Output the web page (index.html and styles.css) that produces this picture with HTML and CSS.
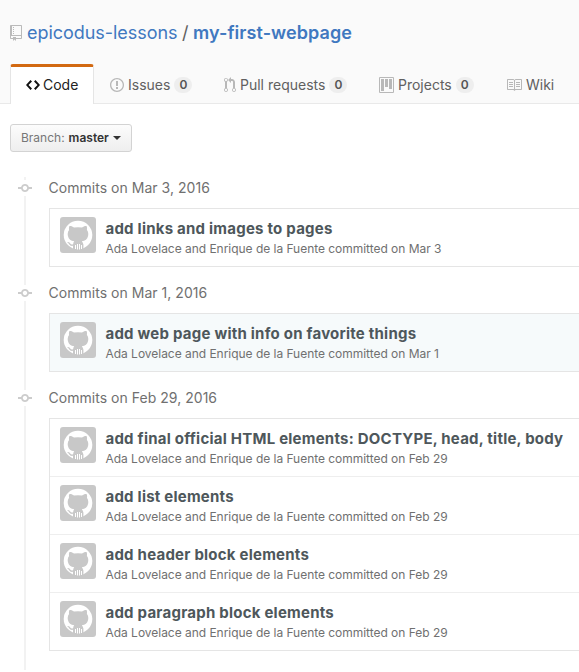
FILE: index.html
```html
<!DOCTYPE html>
<html lang="en">
<head>
<meta charset="utf-8">
<title>my-first-webpage</title>
<link rel="stylesheet" href="styles.css">
</head>
<body>
<svg class="defs" width="0" height="0" aria-hidden="true">
  <symbol id="commit" viewBox="0 0 14 16"><path d="M10.86 7c-.45-1.72-2-3-3.86-3-1.86 0-3.41 1.28-3.86 3H0v2h3.14c.45 1.72 2 3 3.86 3 1.86 0 3.41-1.28 3.86-3H14V7h-3.14zM7 10.2c-1.22 0-2.2-.98-2.2-2.2 0-1.22.98-2.2 2.2-2.2 1.22 0 2.2.98 2.2 2.2 0 1.22-.98 2.2-2.2 2.2z"/></symbol>
  <symbol id="avatar" viewBox="0 0 36 36">
    <circle cx="18" cy="18" r="14.3" fill="#fff"/>
    <path fill="#c8c8c8" d="M9.3 9.2C10.8 8.8 12.5 9.6 14 10.6Q18 9.9 22 10.6C23.5 9.6 25.2 8.8 26.7 9.2Q27.4 11 26.9 12.9C28.3 14.4 28.6 17 28 19.3C27.3 22.3 25.3 23.7 21.8 24.3Q23 25.5 23.4 27.5V33H13V28.8C10.5 29.2 9.6 28 8.8 26.7Q8.2 25.8 7.2 25.2C9 24.8 9.8 26 10.5 26.8Q11.4 27.8 13.1 27.2Q13.3 25.2 14.2 24.3C10.7 23.7 8.7 22.3 8 19.3C7.4 17 7.7 14.4 9.1 12.9Q8.6 11 9.3 9.2Z"/>
    <path fill="none" stroke="#fff" stroke-width="1" d="M15.5 28V32M17.5 27V32.5M19.5 27V32.5M21.5 28V32"/>
  </symbol>
</svg>
<header class="head">
  <h1 class="repo">
    <svg class="repo-icon" viewBox="0 0 12 16"><path d="M4 9H3V8h1v1zm0-3H3v1h1V6zm0-2H3v1h1V4zm0-2H3v1h1V2zm8-1v12c0 .55-.45 1-1 1H6v2l-1.5-1.5L3 16v-2H1c-.55 0-1-.45-1-1V1c0-.55.45-1 1-1h10c.55 0 1 .45 1 1zm-1 10H1v2h2v-1h3v1h5v-2zm0-10H2v9h9V1z"/></svg>
    <a class="owner">epicodus-lessons</a><span class="slash">/</span><a class="name">my-first-webpage</a>
  </h1>
  <nav class="tabs">
    <a class="tab tab-code"><svg width="14" height="16" viewBox="0 0 14 16"><path d="M9.5 3L8 4.5 11.5 8 8 11.5 9.5 13 14 8 9.5 3zm-5 0L0 8l4.5 5L6 11.5 2.5 8 6 4.5 4.5 3z"/></svg><span>Code</span></a>
    <a class="tab tab-issues"><svg width="14" height="16" viewBox="0 0 14 16"><path d="M7 2.3c3.14 0 5.7 2.56 5.7 5.7s-2.56 5.7-5.7 5.7A5.71 5.71 0 0 1 1.3 8c0-3.14 2.56-5.7 5.7-5.7zM7 1C3.14 1 0 4.14 0 8s3.14 7 7 7 7-3.14 7-7-3.14-7-7-7zm1 3H6v5h2V4zm0 6H6v2h2v-2z"/></svg><span>Issues</span><b class="count">0</b></a>
    <a class="tab tab-pulls"><svg width="12" height="16" viewBox="0 0 12 16"><path d="M11 11.28V5c-.03-.78-.34-1.47-.94-2.06C9.46 2.35 8.78 2.03 8 2H7V0L4 3l3 3V4h1c.27.02.48.11.69.31.21.2.3.42.31.69v6.28A1.993 1.993 0 0 0 10 15a1.993 1.993 0 0 0 1-3.72zm-1 2.92c-.66 0-1.2-.55-1.2-1.2 0-.65.55-1.2 1.2-1.2.65 0 1.2.55 1.2 1.2 0 .65-.55 1.2-1.2 1.2zM4 3c0-1.11-.89-2-2-2a1.993 1.993 0 0 0-1 3.72v6.56A1.993 1.993 0 0 0 2 15a1.993 1.993 0 0 0 1-3.72V4.72c.59-.34 1-.98 1-1.72zm-.8 10c0 .66-.55 1.2-1.2 1.2-.65 0-1.2-.55-1.2-1.2 0-.65.55-1.2 1.2-1.2.65 0 1.2.55 1.2 1.2zM2 4.2C1.34 4.2.8 3.65.8 3c0-.65.55-1.2 1.2-1.2.65 0 1.2.55 1.2 1.2 0 .65-.55 1.2-1.2 1.2z"/></svg><span>Pull requests</span><b class="count">0</b></a>
    <a class="tab tab-projects"><svg width="15" height="16" viewBox="0 0 15 16"><path fill-rule="evenodd" d="M10 12h3V2h-3v10zm-4-2h3V2H6v8zm-4 4h3V2H2v12zm-1 1h13V1H1v14zM14 0H1a1 1 0 0 0-1 1v14a1 1 0 0 0 1 1h13a1 1 0 0 0 1-1V1a1 1 0 0 0-1-1z"/></svg><span>Projects</span><b class="count">0</b></a>
    <a class="tab tab-wiki"><svg width="16" height="16" viewBox="0 0 16 16"><path d="M3 5h4v1H3V5zm0 3h4V7H3v1zm0 2h4V9H3v1zm11-5h-4v1h4V5zm0 2h-4v1h4V7zm0 2h-4v1h4V9zm2-6v9c0 .55-.45 1-1 1H9.5l-1 1-1-1H2c-.55 0-1-.45-1-1V3c0-.55.45-1 1-1h5.5l1 1 1-1H15c.55 0 1 .45 1 1zm-8 .5L7.5 3H2v9h6V3.5zm7-.5H9.5l-.5.5V12h6V3z"/></svg><span>Wiki</span></a>
  </nav>
</header>
<main>
  <button class="branch"><span>Branch:</span><b>master</b><i class="caret"></i></button>
  <div class="timeline">
    <section class="group">
      <h2 class="day"><svg class="dot"><use href="#commit"/></svg>Commits on Mar 3, 2016</h2>
      <ol class="list">
        <li class="row"><svg class="avatar"><use href="#avatar"/></svg><div><p class="title">add links and images to pages</p><p class="meta">Ada Lovelace and Enrique de la Fuente committed on Mar 3</p></div></li>
      </ol>
    </section>
    <section class="group">
      <h2 class="day"><svg class="dot"><use href="#commit"/></svg>Commits on Mar 1, 2016</h2>
      <ol class="list">
        <li class="row active"><svg class="avatar"><use href="#avatar"/></svg><div><p class="title">add web page with info on favorite things</p><p class="meta">Ada Lovelace and Enrique de la Fuente committed on Mar 1</p></div></li>
      </ol>
    </section>
    <section class="group">
      <h2 class="day"><svg class="dot"><use href="#commit"/></svg>Commits on Feb 29, 2016</h2>
      <ol class="list">
        <li class="row"><svg class="avatar"><use href="#avatar"/></svg><div><p class="title">add final official HTML elements: DOCTYPE, head, title, body</p><p class="meta">Ada Lovelace and Enrique de la Fuente committed on Feb 29</p></div></li>
        <li class="row"><svg class="avatar"><use href="#avatar"/></svg><div><p class="title">add list elements</p><p class="meta">Ada Lovelace and Enrique de la Fuente committed on Feb 29</p></div></li>
        <li class="row"><svg class="avatar"><use href="#avatar"/></svg><div><p class="title">add header block elements</p><p class="meta">Ada Lovelace and Enrique de la Fuente committed on Feb 29</p></div></li>
        <li class="row"><svg class="avatar"><use href="#avatar"/></svg><div><p class="title">add paragraph block elements</p><p class="meta">Ada Lovelace and Enrique de la Fuente committed on Feb 29</p></div></li>
      </ol>
    </section>
  </div>
</main>
</body>
</html>
```
FILE: styles.css
```css
* { box-sizing: border-box; }
body { margin: 0; height: 672px; overflow: hidden; background: #fff; color: #606060; font: 14px/20px Inter, "Liberation Sans", sans-serif; }
h1, h2, p, ol { margin: 0; padding: 0; font-weight: 400; list-style: none; }
svg { flex: none; fill: currentColor; }
.defs { display: block; }
.head { height: 104px; padding: 20px 0 0 10px; background: #fafafa; border-bottom: 1px solid #e9e9e9; }
.repo { display: flex; align-items: center; height: 26px; font-size: 18px; line-height: 26px; white-space: nowrap; }
.repo-icon { width: 12px; height: 16px; margin-right: 5px; color: #bababa; }
.repo a { color: #4078c0; }
.repo .owner { letter-spacing: -0.04px; }
.repo .name { font-weight: 600; letter-spacing: 0.07px; }
.slash { margin: 0 4.5px; }
.tabs { display: flex; height: 40px; margin-top: 18px; }
.tab { display: flex; align-items: center; height: 39px; padding: 3px 0 0 16px; white-space: nowrap; }
.tab svg { margin-right: 4px; color: #b8b8b8; }
.tab-code { width: 84px; height: 40px; padding: 0 0 2px 15px; background: #fff; color: #222; border: 1px solid #e5e5e5; border-top: 3px solid #d26911; border-bottom: 0; border-radius: 3px 3px 0 0; }
.tab-code svg { margin-right: 3px; color: #111; }
.tab-issues { width: 113px; }
.tab-pulls { width: 156px; padding-left: 17px; }
.tab-projects { width: 127px; }
.count { margin-left: 4px; width: 18px; height: 16px; border-radius: 9px; background: #eee; color: #555; font-size: 12px; line-height: 16px; font-weight: 600; text-align: center; }
.branch { display: flex; align-items: center; width: 122px; height: 28px; margin: 20px 0 0 10px; padding: 0 10px; border: 1px solid #d3d3d3; border-radius: 3px; background: linear-gradient(#fcfcfc, #eee); color: #777; font: 12px/18px Inter, sans-serif; white-space: nowrap; }
.branch b { margin-left: 4px; color: #333; font-weight: 600; }
.caret { margin-left: 4px; border: 4px solid transparent; border-top-color: #333; border-bottom: 0; }
.timeline { margin-top: 25px; padding: 1px 0 3px 24px; background: linear-gradient(#f2f2f2, #f2f2f2) 24px 0 / 2px 100% no-repeat; }
.day { display: flex; align-items: center; height: 20px; margin-left: -6px; color: #707070; font-size: 14px; letter-spacing: 0.03px; }
.dot { width: 14px; height: 16px; margin-right: 16.5px; color: #ccc; background: #fff; }
.list { margin: 10px 0 16px 25px; border: 1px solid #e5e5e5; border-right: 0; }
.row { display: flex; height: 58px; padding: 8px 0 0 10px; border-bottom: 1px solid #eee; }
.row:last-child { height: 57px; border-bottom: 0; }
.row.active { background: #f6fafb; }
.avatar { width: 36px; height: 36px; margin-right: 9.5px; border-radius: 3px; background: #c8c8c8; }
.title { padding-top: 2px; color: #4e575b; font-size: 15px; line-height: 20px; font-weight: 700; letter-spacing: 0.23px; white-space: nowrap; }
.meta { color: #707070; font-size: 12px; line-height: 20px; letter-spacing: -0.03px; white-space: nowrap; }
```
